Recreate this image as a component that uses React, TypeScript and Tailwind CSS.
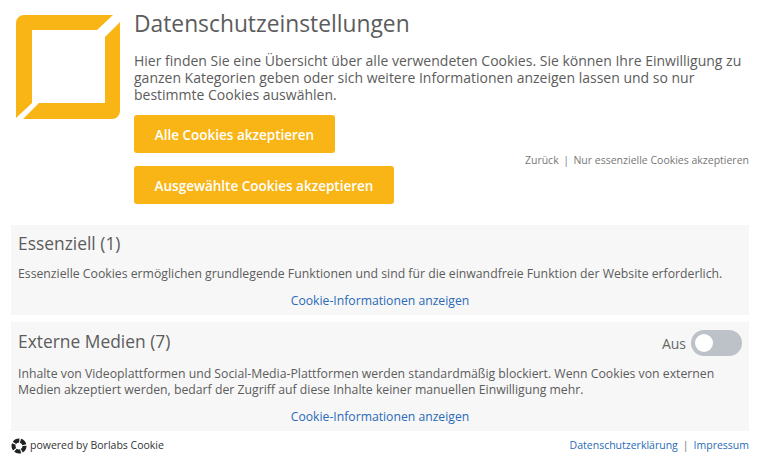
export default function App() {
  return (
    <div className="w-[759px] h-[465px] bg-white overflow-hidden pl-[11px] pr-[10px] pt-[15px] font-['Open_Sans',sans-serif] text-[#5c5c5c]">
      <div className="flex h-[189px]">
        <svg width="104" height="104" viewBox="0 0 104 104" className="ml-[5px] mr-[14px] shrink-0">
          <path fill="#f9b516" d="M8 0H97L81 15H16V88L0 103V8A8 8 0 0 1 8 0Z" />
          <path fill="#f9b516" d="M104 7V96A8 8 0 0 1 96 104H7L23 88H89V22Z" />
        </svg>
        <div className="flex-1 min-w-0 flex flex-col">
          <div className="text-[22.8px] leading-[20px] mt-[-1px]">Datenschutzeinstellungen</div>
          <p className="text-[14px] leading-[17px] mt-[18px]">
            Hier finden Sie eine Übersicht über alle verwendeten Cookies. Sie können Ihre Einwilligung zu ganzen Kategorien geben oder sich weitere Informationen anzeigen lassen und so nur bestimmte Cookies auswählen.
          </p>
          <div className="flex justify-between mt-[12px]">
            <div className="flex flex-col gap-[13px] items-start">
              <div className="h-[38px] w-[201px] rounded-[3px] bg-[#f9b516] text-white text-[13.5px] font-semibold flex items-center justify-center pt-[2px]">Alle Cookies akzeptieren</div>
              <div className="h-[38px] w-[260px] rounded-[3px] bg-[#f9b516] text-white text-[13.5px] font-semibold flex items-center justify-center pt-[2px]">Ausgewählte Cookies akzeptieren</div>
            </div>
            <div className="flex gap-[4.5px] text-[10.5px] text-[#777] mt-[38px]">
              <span>Zurück</span>
              <span>|</span>
              <span>Nur essenzielle Cookies akzeptieren</span>
            </div>
          </div>
        </div>
      </div>
      <div className="mt-[21px] h-[90px] bg-[#f7f7f7] px-[7px] pt-[7px]">
        <div className="text-[17.4px] leading-[22px]">Essenziell (1)</div>
        <p className="text-[12.25px] leading-[16px] mt-[12px]">Essenzielle Cookies ermöglichen grundlegende Funktionen und sind für die einwandfreie Funktion der Website erforderlich.</p>
        <div className="text-[12.2px] leading-[16px] text-[#2a6ab8] text-center mt-[11px]">Cookie-Informationen anzeigen</div>
      </div>
      <div className="mt-[7px] h-[109px] bg-[#f7f7f7] px-[7px] pt-[8px]">
        <div className="flex justify-between items-start h-[26px]">
          <div className="text-[17.4px] leading-[22px]">Externe Medien (7)</div>
          <div className="flex items-center gap-[5px] text-[14px] text-[#666]">
            <span>Aus</span>
            <div className="w-[51px] h-[26px] rounded-full bg-[#bdc1c8] flex items-center pl-[4px]">
              <div className="w-[18px] h-[18px] rounded-full bg-white" />
            </div>
          </div>
        </div>
        <p className="text-[12.25px] leading-[16px] mt-[10px]">Inhalte von Videoplattformen und Social-Media-Plattformen werden standardmäßig blockiert. Wenn Cookies von externen Medien akzeptiert werden, bedarf der Zugriff auf diese Inhalte keiner manuellen Einwilligung mehr.</p>
        <div className="text-[12.2px] leading-[16px] text-[#2a6ab8] text-center mt-[11px]">Cookie-Informationen anzeigen</div>
      </div>
      <div className="flex justify-between items-center mt-[7px] h-[16px]">
        <div className="flex items-center gap-[3px] text-[10.5px] text-[#333]">
          <svg width="16" height="16" viewBox="0 0 16 16">
            <circle cx="8" cy="8" r="5.5" fill="none" stroke="#222" strokeWidth="4" strokeDasharray="5.5 1.2" />
          </svg>
          <span>powered by Borlabs Cookie</span>
        </div>
        <div className="flex gap-[5px] text-[10.5px] text-[#2a6ab8]">
          <span>Datenschutzerklärung</span>
          <span className="text-[#777]">|</span>
          <span>Impressum</span>
        </div>
      </div>
    </div>
  );
}
